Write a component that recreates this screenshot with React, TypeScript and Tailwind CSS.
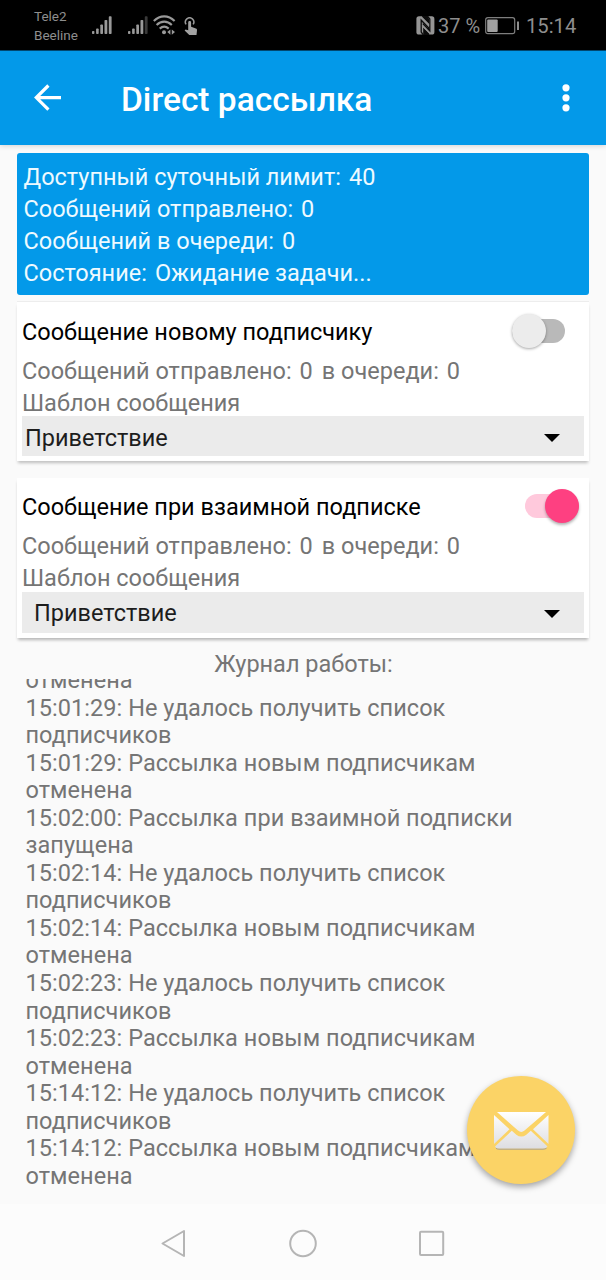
import React from "react";

const logLines: string[] = [
  "отменена",
  "15:01:29: Не удалось получить список",
  "подписчиков",
  "15:01:29: Рассылка новым подписчикам",
  "отменена",
  "15:02:00: Рассылка при взаимной подписки",
  "запущена",
  "15:02:14: Не удалось получить список",
  "подписчиков",
  "15:02:14: Рассылка новым подписчикам",
  "отменена",
  "15:02:23: Не удалось получить список",
  "подписчиков",
  "15:02:23: Рассылка новым подписчикам",
  "отменена",
  "15:14:12: Не удалось получить список",
  "подписчиков",
  "15:14:12: Рассылка новым подписчикам",
  "отменена",
];

function Signal({ weak }: { weak?: boolean }) {
  return (
    <svg width="20" height="19" viewBox="0 0 20 19" fill="#999">
      <rect x="0" y="15" width="2.4" height="3" rx="0.8" />
      <rect x="4.1" y="12.5" width="2.6" height="5.5" rx="0.8" />
      <rect x="8.3" y="8.5" width="2.7" height="9.5" rx="0.8" />
      <rect x="12.5" y="4" width="2.8" height="14" rx="0.8" />
      <rect x="16.8" y="0.2" width="2.8" height="17.8" rx="0.8" fill={weak ? "#3a3a3a" : "#999"} />
    </svg>
  );
}

function StatusBar() {
  return (
    <div className="flex h-[51px] shrink-0 items-start border-b border-[#024b75] bg-black text-[#8e8e8e]">
      <div className="ml-[34px] mt-[7px] w-[58px] text-[13.5px] leading-[18.5px]">
        <div>Tele2</div>
        <div>Beeline</div>
      </div>
      <div className="mt-4 flex w-[20px]"><Signal /></div>
      <div className="ml-[16px] mt-4 flex w-[20px]"><Signal weak /></div>
      <svg className="ml-[5px] mt-[15px]" width="23" height="20" viewBox="0 0 23 20" fill="none" stroke="#999" strokeWidth="2.1">
        <path d="M0.8 6.1C7.2 -0.2 15.2 -0.2 21.6 6.1" />
        <path d="M3.6 9.9C8.2 5.5 14.2 5.5 18.8 9.9" />
        <path d="M6.7 13.6C9.4 11.2 13 11.2 15.7 13.6" />
        <circle cx="11" cy="17.2" r="2" fill="#999" stroke="none" />
        <path d="M17.4 14.4v5.4L14.3 17.1z M18.8 14.4v5.4L22 17.1z" fill="#999" stroke="none" />
      </svg>
      <svg className="ml-[8px] mt-[17px]" width="14" height="19" viewBox="0 0 14 19">
        <path d="M2.1 7.4a4.2 4.2 0 1 1 7 0" fill="none" stroke="#999" strokeWidth="1.5" />
        <path d="M4.2 5.5c0-1.9 2.9-1.9 2.9 0v4.3l4.8 1.8c.9.3 1.2.9 1.1 1.7l-.5 4.7H5.3L.6 13.4l.9-1 2.7.9z" fill="#a2a2a2" />
      </svg>
      <svg className="ml-auto mt-[16px]" width="19" height="19" viewBox="0 0 19 19">
        <rect x=".4" y=".3" width="18" height="18.2" rx="2.6" fill="#959595" />
        <path d="M7.2 18.8L5.2 16V4.2L12.6 11.8V14" fill="none" stroke="#0c0c0c" strokeWidth="1.3" />
        <path d="M11.4 0L13.8 3V14.8L6.8 7.6" fill="none" stroke="#0c0c0c" strokeWidth="1.3" />
        <path d="M6.2 0H11.6L13 3V7.8L6 .8zM7.2 19V11.2L13.2 17.4V19z" fill="#0c0c0c" />
        <path d="M5.2 1.4L13.2 9.4M6 9.6L13.8 17.4" stroke="#959595" strokeWidth="1.1" />
      </svg>
      <span className="ml-[3px] mt-[13px] w-[47px] whitespace-nowrap text-[20px] leading-[27px]">37 %</span>
      <svg className="mt-[17px]" width="35" height="18" viewBox="0 0 35 18" fill="none">
        <rect x=".7" y=".7" width="29" height="16" rx="2.2" stroke="#7e7e7e" strokeWidth="1.2" />
        <rect x="2.2" y="2.4" width="10.5" height="12.6" rx="1" fill="#a0a0a0" />
        <path d="M33 4.5v8.5" stroke="#8e8e8e" strokeWidth="2" />
      </svg>
      <span className="ml-[6px] mr-[29px] mt-[13px] w-[51px] whitespace-nowrap text-[20.2px] leading-[27px]">15:14</span>
    </div>
  );
}

function Toolbar() {
  return (
    <header className="z-10 flex h-[94px] shrink-0 items-center bg-[#0399e9] text-white shadow-[0_1px_5px_rgba(0,0,0,0.16)]">
      <svg className="ml-[33px]" width="28" height="28" viewBox="0 0 28 28" fill="none" stroke="white" strokeWidth="3.2">
        <path d="M15.4 1.5L3.3 13.6l12.1 12.1M3.4 13.6H28" />
      </svg>
      <h1 className="ml-[60px] mt-[3px] whitespace-nowrap text-[33.5px] font-medium leading-10">Direct рассылка</h1>
      <svg className="ml-auto mr-[36px]" width="8" height="28" viewBox="0 0 8 28" fill="white">
        <circle cx="4" cy="3.8" r="3.6" />
        <circle cx="4" cy="13.8" r="3.6" />
        <circle cx="4" cy="23.8" r="3.6" />
      </svg>
    </header>
  );
}

function Stat({ label, value }: { label: string; value: string }) {
  return (
    <div className="flex h-8 items-center gap-[8px] whitespace-nowrap">
      <span>{label}</span>
      <span>{value}</span>
    </div>
  );
}

function Toggle({ on }: { on?: boolean }) {
  return on ? (
    <div className="mb-[3px] mr-[10px] flex h-6 w-[54px] items-center justify-end rounded-full bg-[#ffc9dc]">
      <div className="size-[34px] shrink-0 rounded-full bg-[#fe4081] shadow-[0_2px_3px_rgba(0,0,0,0.3)]" />
    </div>
  ) : (
    <div className="mb-[3px] mr-[24px] flex h-6 w-[53px] items-center rounded-full bg-[#b9b9b9]">
      <div className="size-[34px] shrink-0 rounded-full bg-[#ececec] shadow-[0_1px_3px_rgba(0,0,0,0.35)]" />
    </div>
  );
}

function TaskCard({ title, on }: { title: string; on?: boolean }) {
  return (
    <section className={on ? "mx-[17px] h-[160px] bg-white px-[5px] pt-[5px] shadow-[0_3px_3px_-1px_rgba(0,0,0,0.28)]" : "mx-[17px] h-[159px] bg-white px-[5px] pt-[6px] shadow-[0_3px_3px_-1px_rgba(0,0,0,0.24),0_-1px_0_rgba(0,0,0,0.05)]"}>
      <div className="-mr-[5px] flex h-[48px] items-center justify-between text-black">
        <h2 className="whitespace-nowrap pt-[2px]">{title}</h2>
        <Toggle on={on} />
      </div>
      <div className="flex h-8 items-center gap-[9px] whitespace-nowrap text-[#757575]">
        <Stat label="Сообщений отправлено:" value="0" />
        <Stat label="в очереди:" value="0" />
      </div>
      <div className={on ? "flex h-[29px] items-center pt-[3px] text-[#757575]" : "flex h-[28px] items-center pt-[4px] text-[#757575]"}>Шаблон сообщения</div>
      <button className={on ? "flex h-[41px] w-full items-center justify-between bg-[#ebebeb] pl-[12px] pr-[24px] pt-[2px] text-[#1d1d1d]" : "flex h-[40px] w-full items-center justify-between bg-[#ebebeb] pl-[3px] pr-[24px] pt-[3px] text-[#1d1d1d]"}>
        <span className={on ? "" : "pt-[2px]"}>Приветствие</span>
        <svg width="16" height="8" viewBox="0 0 16 8"><path d="M0 0h16L8 8z" fill="black" /></svg>
      </button>
    </section>
  );
}

function NavBar() {
  return (
    <nav className="flex h-[76px] shrink-0 items-center bg-[#fcfcfc] pl-[160px] pt-[3px]">
      <svg width="30" height="30" viewBox="0 0 30 30" fill="none" stroke="#b5b5b5" strokeWidth="2" strokeLinejoin="round">
        <path d="M24 2v25L2.5 14.5z" />
      </svg>
      <svg className="ml-[98px]" width="30" height="30" viewBox="0 0 30 30" fill="none" stroke="#b5b5b5" strokeWidth="2">
        <circle cx="15" cy="14.5" r="12.8" />
      </svg>
      <svg className="ml-[99px]" width="30" height="30" viewBox="0 0 30 30" fill="none" stroke="#b5b5b5" strokeWidth="2">
        <rect x="3" y="2.8" width="23.2" height="23.2" rx="1" />
      </svg>
    </nav>
  );
}

export default function App() {
  return (
    <div className="relative flex h-[1280px] w-[606px] flex-col overflow-hidden bg-[#fafafa] font-[Roboto,sans-serif] text-[23.5px] leading-[27.5px]">
      <StatusBar />
      <Toolbar />
      <main className="flex min-h-0 flex-1 flex-col pt-[8px]">
        <section className="mx-[17px] mb-[8px] h-[142px] shrink-0 rounded-[3px] bg-[#0399e9] pl-[6.5px] pt-[9px] text-[#eefaff]">
          <Stat label="Доступный суточный лимит:" value="40" />
          <Stat label="Сообщений отправлено:" value="0" />
          <Stat label="Сообщений в очереди:" value="0" />
          <Stat label="Состояние:" value="Ожидание задачи..." />
        </section>
        <div className="-mt-px flex shrink-0 flex-col gap-[17px]">
          <TaskCard title="Сообщение новому подписчику" />
          <TaskCard title="Сообщение при взаимной подписке" on />
        </div>
        <h3 className="mt-[13px] h-[28px] shrink-0 pl-px text-center text-[#757575]">Журнал работы:</h3>
        <div className="flex min-h-0 flex-1 flex-col overflow-hidden pl-[25.5px] tracking-[0.05px] text-[#757575]">
          <div className="-mt-[12px]">
            {logLines.map((line, i) => (
              <div key={i} className="h-[27.55px] whitespace-nowrap">{line}</div>
            ))}
          </div>
        </div>
      </main>
      <NavBar />
      <button aria-label="Написать" className="absolute left-[467px] top-[1076px] flex size-[108px] items-center justify-center rounded-full bg-[#fbd366] shadow-[0_3px_6px_rgba(0,0,0,0.35)]">
        <svg width="56" height="40" viewBox="0 0 56 40">
          <defs>
            <linearGradient id="paper" gradientUnits="userSpaceOnUse" x1="0" y1="2" x2="0" y2="39">
              <stop offset="0" stopColor="#ffffff" />
              <stop offset="1" stopColor="#dddde1" />
            </linearGradient>
          </defs>
          <g fill="url(#paper)">
            <path d="M4 2H53L31.5 20.5Q28.3 23.3 25 20.5Z" />
            <path d="M1 5L16.5 19.2L1 34Z" />
            <path d="M55.5 5V34L40 19.2Z" />
            <path d="M18.8 20.8L23.3 24.7Q28.3 28.5 33.3 24.7L37.8 20.8L54.5 36.5Q53 38.8 50 38.8H6Q3 38.8 2 36.5Z" />
          </g>
          <path d="M3 38.3Q4 39.2 6 39.2H50Q52 39.2 53.5 38.3" fill="none" stroke="#aaa391" strokeWidth="1" />
        </svg>
      </button>
    </div>
  );
}
